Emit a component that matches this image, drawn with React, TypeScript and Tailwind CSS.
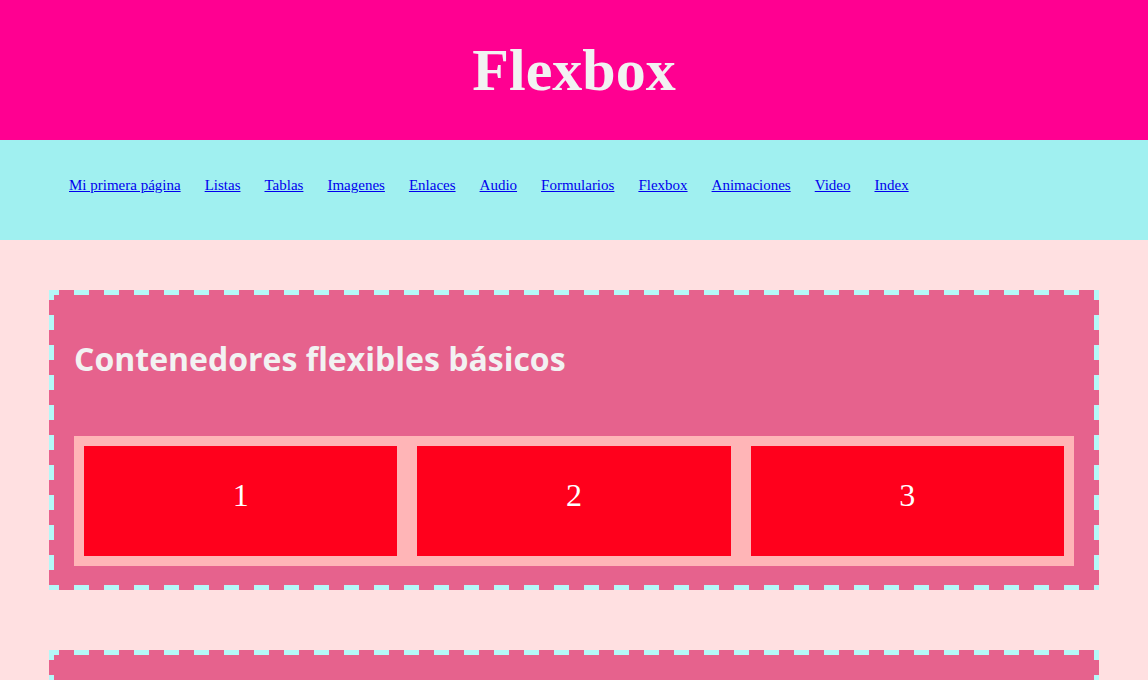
import React from 'react';

const links = [
  'Mi primera página',
  'Listas',
  'Tablas',
  'Imagenes',
  'Enlaces',
  'Audio',
  'Formularios',
  'Flexbox',
  'Animaciones',
  'Video',
  'Index',
];

// dashed border edges, drawn as repeating gradients so the dashes are 15px long like the original
const DashedFrame = () => (
  <>
    <div className="absolute inset-x-0 top-0 h-[5px] bg-[repeating-linear-gradient(90deg,#b4f8f8_0_15px,transparent_15px_30px)] bg-[position:-5px_0]" />
    <div className="absolute inset-x-0 bottom-0 h-[5px] bg-[repeating-linear-gradient(90deg,#b4f8f8_0_15px,transparent_15px_30px)] bg-[position:-5px_0]" />
    <div className="absolute inset-y-0 left-0 w-[5px] bg-[repeating-linear-gradient(180deg,#b4f8f8_0_15px,transparent_15px_30px)] bg-[position:0_-5px]" />
    <div className="absolute inset-y-0 right-0 w-[5px] bg-[repeating-linear-gradient(180deg,#b4f8f8_0_15px,transparent_15px_30px)] bg-[position:0_-5px]" />
  </>
);

const Section = ({ title, items }: { title: string; items: string[] }) => (
  <section className="relative mb-[60px] bg-[#e6628d] px-[25px] pb-[24px] pt-[49px]">
    <DashedFrame />
    <h2 className="mb-[57px] font-['Open_Sans',sans-serif] text-[32px] font-bold leading-[40px] text-[#f2f2f2]">
      {title}
    </h2>
    <div className="flex gap-5 bg-[#ffb5b7] p-[10px]">
      {items.map((item) => (
        <div
          key={item}
          className="flex h-[110px] flex-1 items-center justify-center bg-[#ff001c] pb-[13px] font-['Liberation_Serif',serif] text-[32px] text-white"
        >
          {item}
        </div>
      ))}
    </div>
  </section>
);

export default function App() {
  return (
    <div className="min-h-screen bg-[#ffe0e1] font-['Liberation_Serif',serif]">
      <header className="flex h-[140px] items-center justify-center bg-[#ff0091]">
        <h1 className="text-[60px] font-bold leading-none text-[#f2f2f2]">Flexbox</h1>
      </header>

      <nav className="flex h-[100px] items-center bg-[#a0f0f0] pb-[10px] pl-[69px]">
        <ul className="flex gap-6 text-[15px]">
          {links.map((link) => (
            <li key={link}>
              <a href="#" className="text-[#0000ee] underline">
                {link}
              </a>
            </li>
          ))}
        </ul>
      </nav>

      <main className="px-[49px] pt-[50px]">
        <Section title="Contenedores flexibles básicos" items={['1', '2', '3']} />
        <Section title="Dirección de los elementos" items={['1', '2', '3']} />
      </main>
    </div>
  );
}
